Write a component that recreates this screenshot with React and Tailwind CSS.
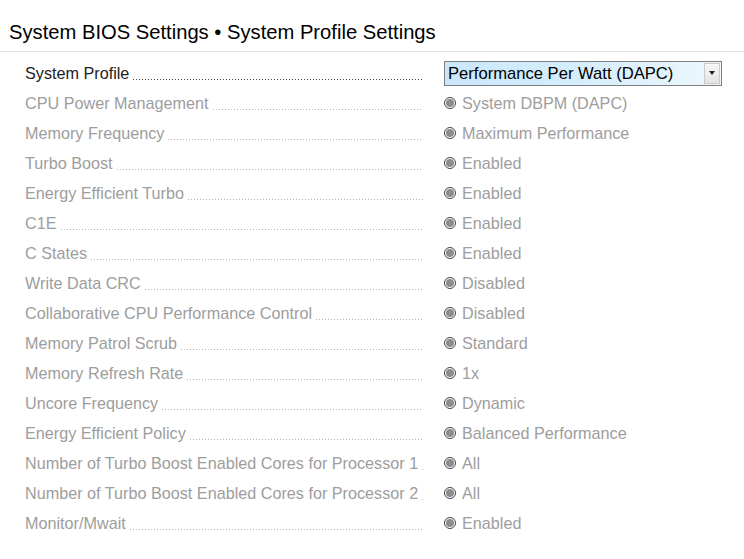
const ROWS = [
  ['CPU Power Management', 'System DBPM (DAPC)'],
  ['Memory Frequency', 'Maximum Performance'],
  ['Turbo Boost', 'Enabled'],
  ['Energy Efficient Turbo', 'Enabled'],
  ['C1E', 'Enabled'],
  ['C States', 'Enabled'],
  ['Write Data CRC', 'Disabled'],
  ['Collaborative CPU Performance Control', 'Disabled'],
  ['Memory Patrol Scrub', 'Standard'],
  ['Memory Refresh Rate', '1x'],
  ['Uncore Frequency', 'Dynamic'],
  ['Energy Efficient Policy', 'Balanced Performance'],
  ['Number of Turbo Boost Enabled Cores for Processor 1', 'All'],
  ['Number of Turbo Boost Enabled Cores for Processor 2', 'All'],
  ['Monitor/Mwait', 'Enabled'],
];

function Label({ text, dark }) {
  return (
    <div className="flex items-end w-[398px] overflow-hidden">
      <span className={`whitespace-nowrap ${dark ? 'text-[#222]' : 'text-[#9d9d9d]'}`}>{text}</span>
      <span
        className={`flex-1 min-w-0 ml-[4px] mb-[5px] h-[1px] bg-repeat-x bg-[length:3px_1px] ${
          dark
            ? 'bg-[linear-gradient(to_right,#444_1px,transparent_1px)]'
            : 'bg-[linear-gradient(to_right,#b5b5b5_1px,transparent_1px)]'
        }`}
      />
    </div>
  );
}

function Radio() {
  return (
    <span className="w-[12px] h-[12px] rounded-full border border-[#444] bg-white flex items-center justify-center mr-[6px]">
      <span className="w-[8px] h-[8px] rounded-full bg-[#8c8c8c]" />
    </span>
  );
}

export default function App() {
  return (
    <div className="w-[744px] h-[559px] bg-white overflow-hidden" style={{ fontFamily: '"Liberation Sans", Arial, sans-serif' }}>
      <div className="h-[52px] pt-[20px] pl-[9px] border-b border-[#e2e2e2]">
        <h1 className="text-[20.2px] leading-[24px] text-black">System BIOS Settings • System Profile Settings</h1>
      </div>
      <div className="pl-[25px] pt-[6px] text-[16.2px]">
        <div className="flex items-center h-[30px]">
          <Label text="System Profile" dark />
          <div className="ml-[21px] w-[278px] h-[25px] border border-[#7f7f7f] flex bg-gradient-to-r from-[#c9e7fc] via-[#d6eefc] to-[#eef7fd]">
            <span className="flex-1 pl-[3px] leading-[23px] text-[16.6px] text-black whitespace-nowrap">Performance Per Watt (DAPC)</span>
            <span className="w-[16px] my-[1px] mr-[1px] border border-[#c9c9c9] bg-gradient-to-b from-[#f7f7f7] to-[#e4e4e4] flex items-center justify-center">
              <svg width="6" height="4" viewBox="0 0 6 4"><path d="M0 0h6L3 4z" fill="#222" /></svg>
            </span>
          </div>
        </div>
        {ROWS.map(([label, value]) => (
          <div key={label} className="flex items-center h-[30px]">
            <Label text={label} />
            <div className="ml-[21px] flex items-center text-[#9d9d9d]">
              <Radio />
              <span>{value}</span>
            </div>
          </div>
        ))}
      </div>
    </div>
  );
}
